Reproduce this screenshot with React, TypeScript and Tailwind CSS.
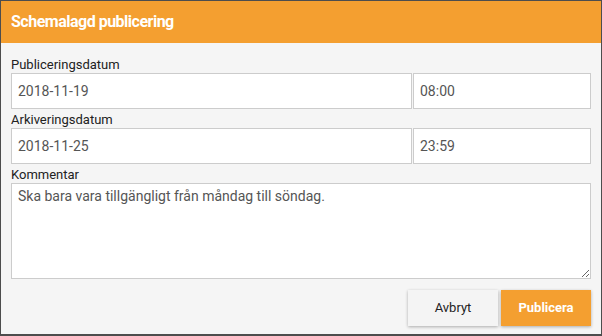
export default function App() {
  return (
    <div className="w-[602px] h-[336px] bg-[#4d4d4d] pt-px pl-px overflow-hidden">
      <div className="w-[600px] h-[333px] bg-[#f5f5f5] flex flex-col font-['Roboto',sans-serif]">
        {/* Header */}
        <div className="h-[42px] bg-[#f49f30] flex items-center px-[10px]">
          <h2 className="text-white text-[16px] font-bold tracking-[-0.5px]">Schemalagd publicering</h2>
        </div>

        <div className="px-[10px] pt-[13px] flex flex-col">
          <label className="text-[13px] leading-[17px] text-[#222]">Publiceringsdatum</label>
          <div className="flex gap-px">
            <input
              readOnly
              value="2018-11-19"
              className="w-[401px] shrink-0 h-[36px] bg-white border border-[#cccccc] px-[6px] text-[14px] text-[#555] outline-none"
            />
            <input
              readOnly
              value="08:00"
              className="flex-1 min-w-0 h-[36px] bg-white border border-[#cccccc] px-[6px] text-[14px] text-[#555] outline-none"
            />
          </div>

          <label className="mt-[2px] text-[13px] leading-[17px] text-[#222]">Arkiveringsdatum</label>
          <div className="flex gap-px">
            <input
              readOnly
              value="2018-11-25"
              className="w-[401px] shrink-0 h-[36px] bg-white border border-[#cccccc] px-[6px] text-[14px] text-[#555] outline-none"
            />
            <input
              readOnly
              value="23:59"
              className="flex-1 min-w-0 h-[36px] bg-white border border-[#cccccc] px-[6px] text-[14px] text-[#555] outline-none"
            />
          </div>

          <label className="mt-[2px] text-[13px] leading-[17px] text-[#222]">Kommentar</label>
          <textarea
            readOnly
            value="Ska bara vara tillgängligt från måndag till söndag."
            className="h-[96px] bg-white border border-[#cccccc] px-[6px] py-[3px] text-[14px] leading-[18px] text-[#555] outline-none resize-y"
          />

          {/* Actions */}
          <div className="mt-[11px] flex justify-end gap-[3px]">
            <button className="w-[90px] h-[36px] bg-[#f4f4f4] text-[#222] text-[13px] font-normal shadow-[0_1px_3px_rgba(0,0,0,0.3)]">
              Avbryt
            </button>
            <button className="w-[90px] h-[36px] bg-[#f49f30] text-white text-[13px] font-bold shadow-[0_1px_3px_rgba(0,0,0,0.3)]">
              Publicera
            </button>
          </div>
        </div>
      </div>
    </div>
  );
}
